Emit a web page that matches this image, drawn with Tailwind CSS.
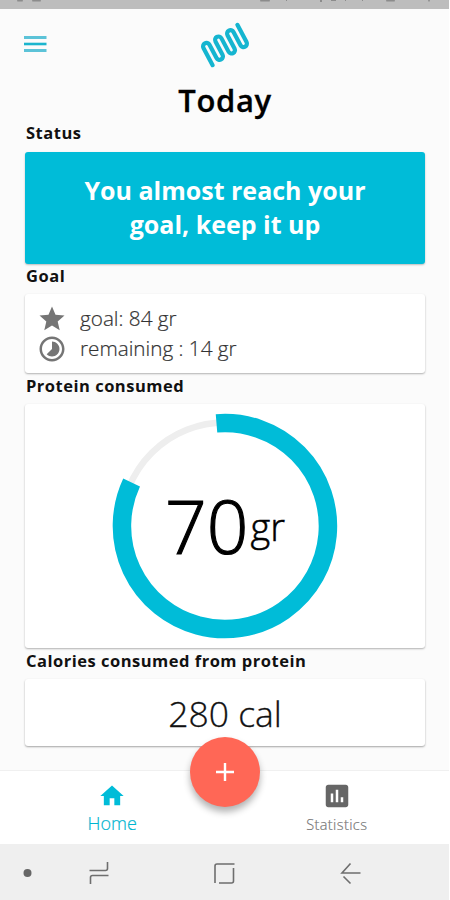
<!DOCTYPE html>
<html lang="en">
<head>
    <meta charset="UTF-8">
    <meta name="viewport" content="width=device-width, initial-scale=1.0">
    <title>Today</title>
    <script src="https://cdn.jsdelivr.net/npm/@tailwindcss/browser@4"></script>
</head>
<body class="bg-white font-['Open_Sans',sans-serif] text-[#111]">
    <div class="w-[449px] h-[900px] flex flex-col bg-[#fbfbfb] overflow-hidden">
        <!-- status bar -->
        <div class="h-[8.5px] shrink-0 bg-[#bdbdbd] overflow-hidden">
            <svg class="block" width="449" height="8" fill="#8c8c8c">
                <rect x="17" y="0" width="6" height="1.5" rx=".7" />
                <rect x="32" y="0" width="9" height="1.5" rx=".7" />
                <rect x="260" y="0" width="10" height="1.5" rx=".7" />
                <rect x="286" y="0" width="1" height="1" />
                <rect x="320" y="0" width="2" height="2" />
                <rect x="331" y="0" width="5" height="1" />
                <rect x="345" y="0" width="1" height="1" />
                <rect x="362" y="0" width="1" height="1" />
                <rect x="386" y="0" width="9" height="1.5" rx=".7" />
                <rect x="428" y="0" width="2" height="1.5" rx=".7" />
            </svg>
        </div>

        <!-- header -->
        <header class="h-[71.5px] shrink-0 grid grid-cols-3 px-6 pt-3">
            <svg class="mt-[14px]" width="24" height="18">
                <path d="M0 2.5h22.5M0 15.5h22.5" stroke="#5cc3d8" stroke-width="2.8" />
                <path d="M0 9h22.5" stroke="#1bb5ce" stroke-width="2.6" />
            </svg>
            <svg class="justify-self-center ml-px" width="56" height="48" viewBox="-28 -24 56 48">
                <g transform="rotate(-28)" fill="none" stroke="#15b5d0" stroke-width="4.2" stroke-linecap="round">
                    <path d="M-20.4 12V-7.500a3.4 3.4 0 0 1 6.8 0V7.500a3.4 3.4 0 0 0 6.8 0V-7.500a3.4 3.4 0 0 1 6.8 0V7.500a3.4 3.4 0 0 0 6.8 0V-7.500a3.4 3.4 0 0 1 6.8 0V7.500a3.4 3.4 0 0 0 6.8 0V-12" />
                </g>
            </svg>
        </header>

        <main class="h-[690px] shrink-0 pl-[25px] pr-6">
            <h1 class="h-[42px] leading-[41px] text-center text-[31px] font-semibold tracking-[0.6px] text-black [-webkit-text-stroke:0.3px]">Today</h1>
            <h2 class="h-[29.5px] leading-[22px] text-[16.5px] font-bold tracking-[0.5px] pl-px">Status</h2>
            <div class="h-[112px] pb-[2px] rounded-[3px] bg-[#00bcd8] shadow-[0_1px_2px_rgba(0,0,0,0.25)] flex items-center justify-center text-center text-white text-[25px] leading-[34px] font-bold">
                <p>You almost reach your<br>goal, keep it up</p>
            </div>
            <h2 class="h-[30.5px] leading-[24px] text-[16.5px] font-bold tracking-[0.5px] pl-px">Goal</h2>
            <div class="h-[79px] rounded-[3px] bg-white shadow-[0_1px_2px_rgba(0,0,0,0.3)] flex flex-col pt-[10px] pl-3 text-[20.7px] leading-[28px] font-light text-[#333] [-webkit-text-stroke:0.2px]">
                <div class="h-[30px] flex items-start gap-3">
                    <svg width="30" height="30" viewBox="0 0 24 24" fill="#757575"><path d="M12 17.27 18.18 21l-1.64-7.03L22 9.24l-7.19-.61L12 2 9.19 8.63 2 9.24l5.46 4.73L5.82 21z" /></svg>
                    <span class="pl-px">goal: 84 gr</span>
                </div>
                <div class="h-[30px] flex items-start gap-3">
                    <svg width="30" height="30" viewBox="0 0 24 24" fill="#757575"><path d="M16.24 7.76C15.07 6.59 13.54 6 12 6v6l-4.24 4.24c2.34 2.34 6.14 2.34 8.49 0 2.34-2.34 2.34-6.14-.01-8.48zM12 2C6.48 2 2 6.48 2 12s4.48 10 10 10 10-4.48 10-10S17.52 2 12 2zm0 18c-4.42 0-8-3.58-8-8s3.58-8 8-8 8 3.58 8 8-3.58 8-8 8z" /></svg>
                    <span class="pl-px">remaining : 14 gr</span>
                </div>
            </div>
            <h2 class="h-[31px] leading-[26px] text-[16.5px] font-bold tracking-[0.5px] pl-px">Protein consumed</h2>
            <div class="h-[244px] rounded-[3px] bg-white shadow-[0_1px_2px_rgba(0,0,0,0.3)] grid place-items-center">
                <svg class="[grid-area:1/1]" width="226" height="226" viewBox="-113 -113 226 226" fill="none">
                    <circle r="103.5" stroke="#eee" stroke-width="6.5" />
                    <path d="M-8.5 -102.6A103 103 0 1 1 -93.4 -43.5" stroke="#00bcd8" stroke-width="18.5" />
                </svg>
                <div class="[grid-area:1/1] flex items-center font-light text-black">
                    <span class="text-[73px] leading-[80px] [-webkit-text-stroke:1.2px]">70</span><span class="pl-[2px] text-[38px] leading-[80px] [-webkit-text-stroke:0.5px]">gr</span>
                </div>
            </div>
            <h2 class="h-[31px] leading-[26px] text-[16.5px] font-bold tracking-[0.5px] pl-px">Calories consumed from protein</h2>
            <div class="h-[67px] rounded-[3px] bg-white shadow-[0_1px_2px_rgba(0,0,0,0.35)] text-center text-[35.5px] leading-[68px] font-light [-webkit-text-stroke:0.3px]">280 cal</div>
        </main>

        <!-- bottom navigation -->
        <nav class="relative h-[74px] shrink-0 bg-white border-t border-[#f0f0f0] grid grid-cols-2 text-center font-light [-webkit-text-stroke:0.2px]">
            <div class="flex flex-col items-center pt-[11px] text-[#00b5d0]">
                <svg width="28" height="28" viewBox="0 0 24 24" fill="#00bcd8"><path d="M10 20v-6h4v6h5v-8h3L12 3 2 12h3v8z" /></svg>
                <span class="text-[18px] leading-[27px]">Home</span>
            </div>
            <div class="flex flex-col items-center pt-[10px] text-[#777]">
                <svg width="30" height="30" viewBox="0 0 24 24" fill="#666"><path d="M19 3H5c-1.1 0-2 .9-2 2v14c0 1.1.9 2 2 2h14c1.1 0 2-.9 2-2V5c0-1.1-.9-2-2-2zM9 17H7v-7h2v7zm4 0h-2V7h2v10zm4 0h-2v-4h2v4z" /></svg>
                <span class="text-[14.5px] leading-[28px] tracking-[0.4px]">Statistics</span>
            </div>
            <button class="absolute left-[190px] -top-[34px] size-[70px] rounded-full bg-[#ff6756] shadow-[0_5px_7px_rgba(0,0,0,0.3)] grid place-items-center">
                <svg width="20" height="20"><path d="M10 1v18M1 10h18" stroke="#fff" stroke-width="2.4" /></svg>
            </button>
        </nav>

        <!-- system keys -->
        <div class="flex-1 bg-[#efefef]">
            <svg width="449" height="56" fill="none" stroke="#6e6e6e" stroke-width="1.6">
                <circle cx="27.5" cy="29" r="4" fill="#666" stroke="none" />
                <path d="M89.500 26.500H105.500Q107.500 26.500 107.500 24.500V18M108.500 31.500H92.500Q90.500 31.500 90.500 33.500V40" />
                <path d="M215 39V22Q215 20 217 20H234.500M233.500 24V37Q233.500 39 231.500 39H219" />
                <path d="M360.500 29H342L350.500 19.500M343.500 32.500L350.500 39.500" />
            </svg>
        </div>
    </div>
</body>
</html>
